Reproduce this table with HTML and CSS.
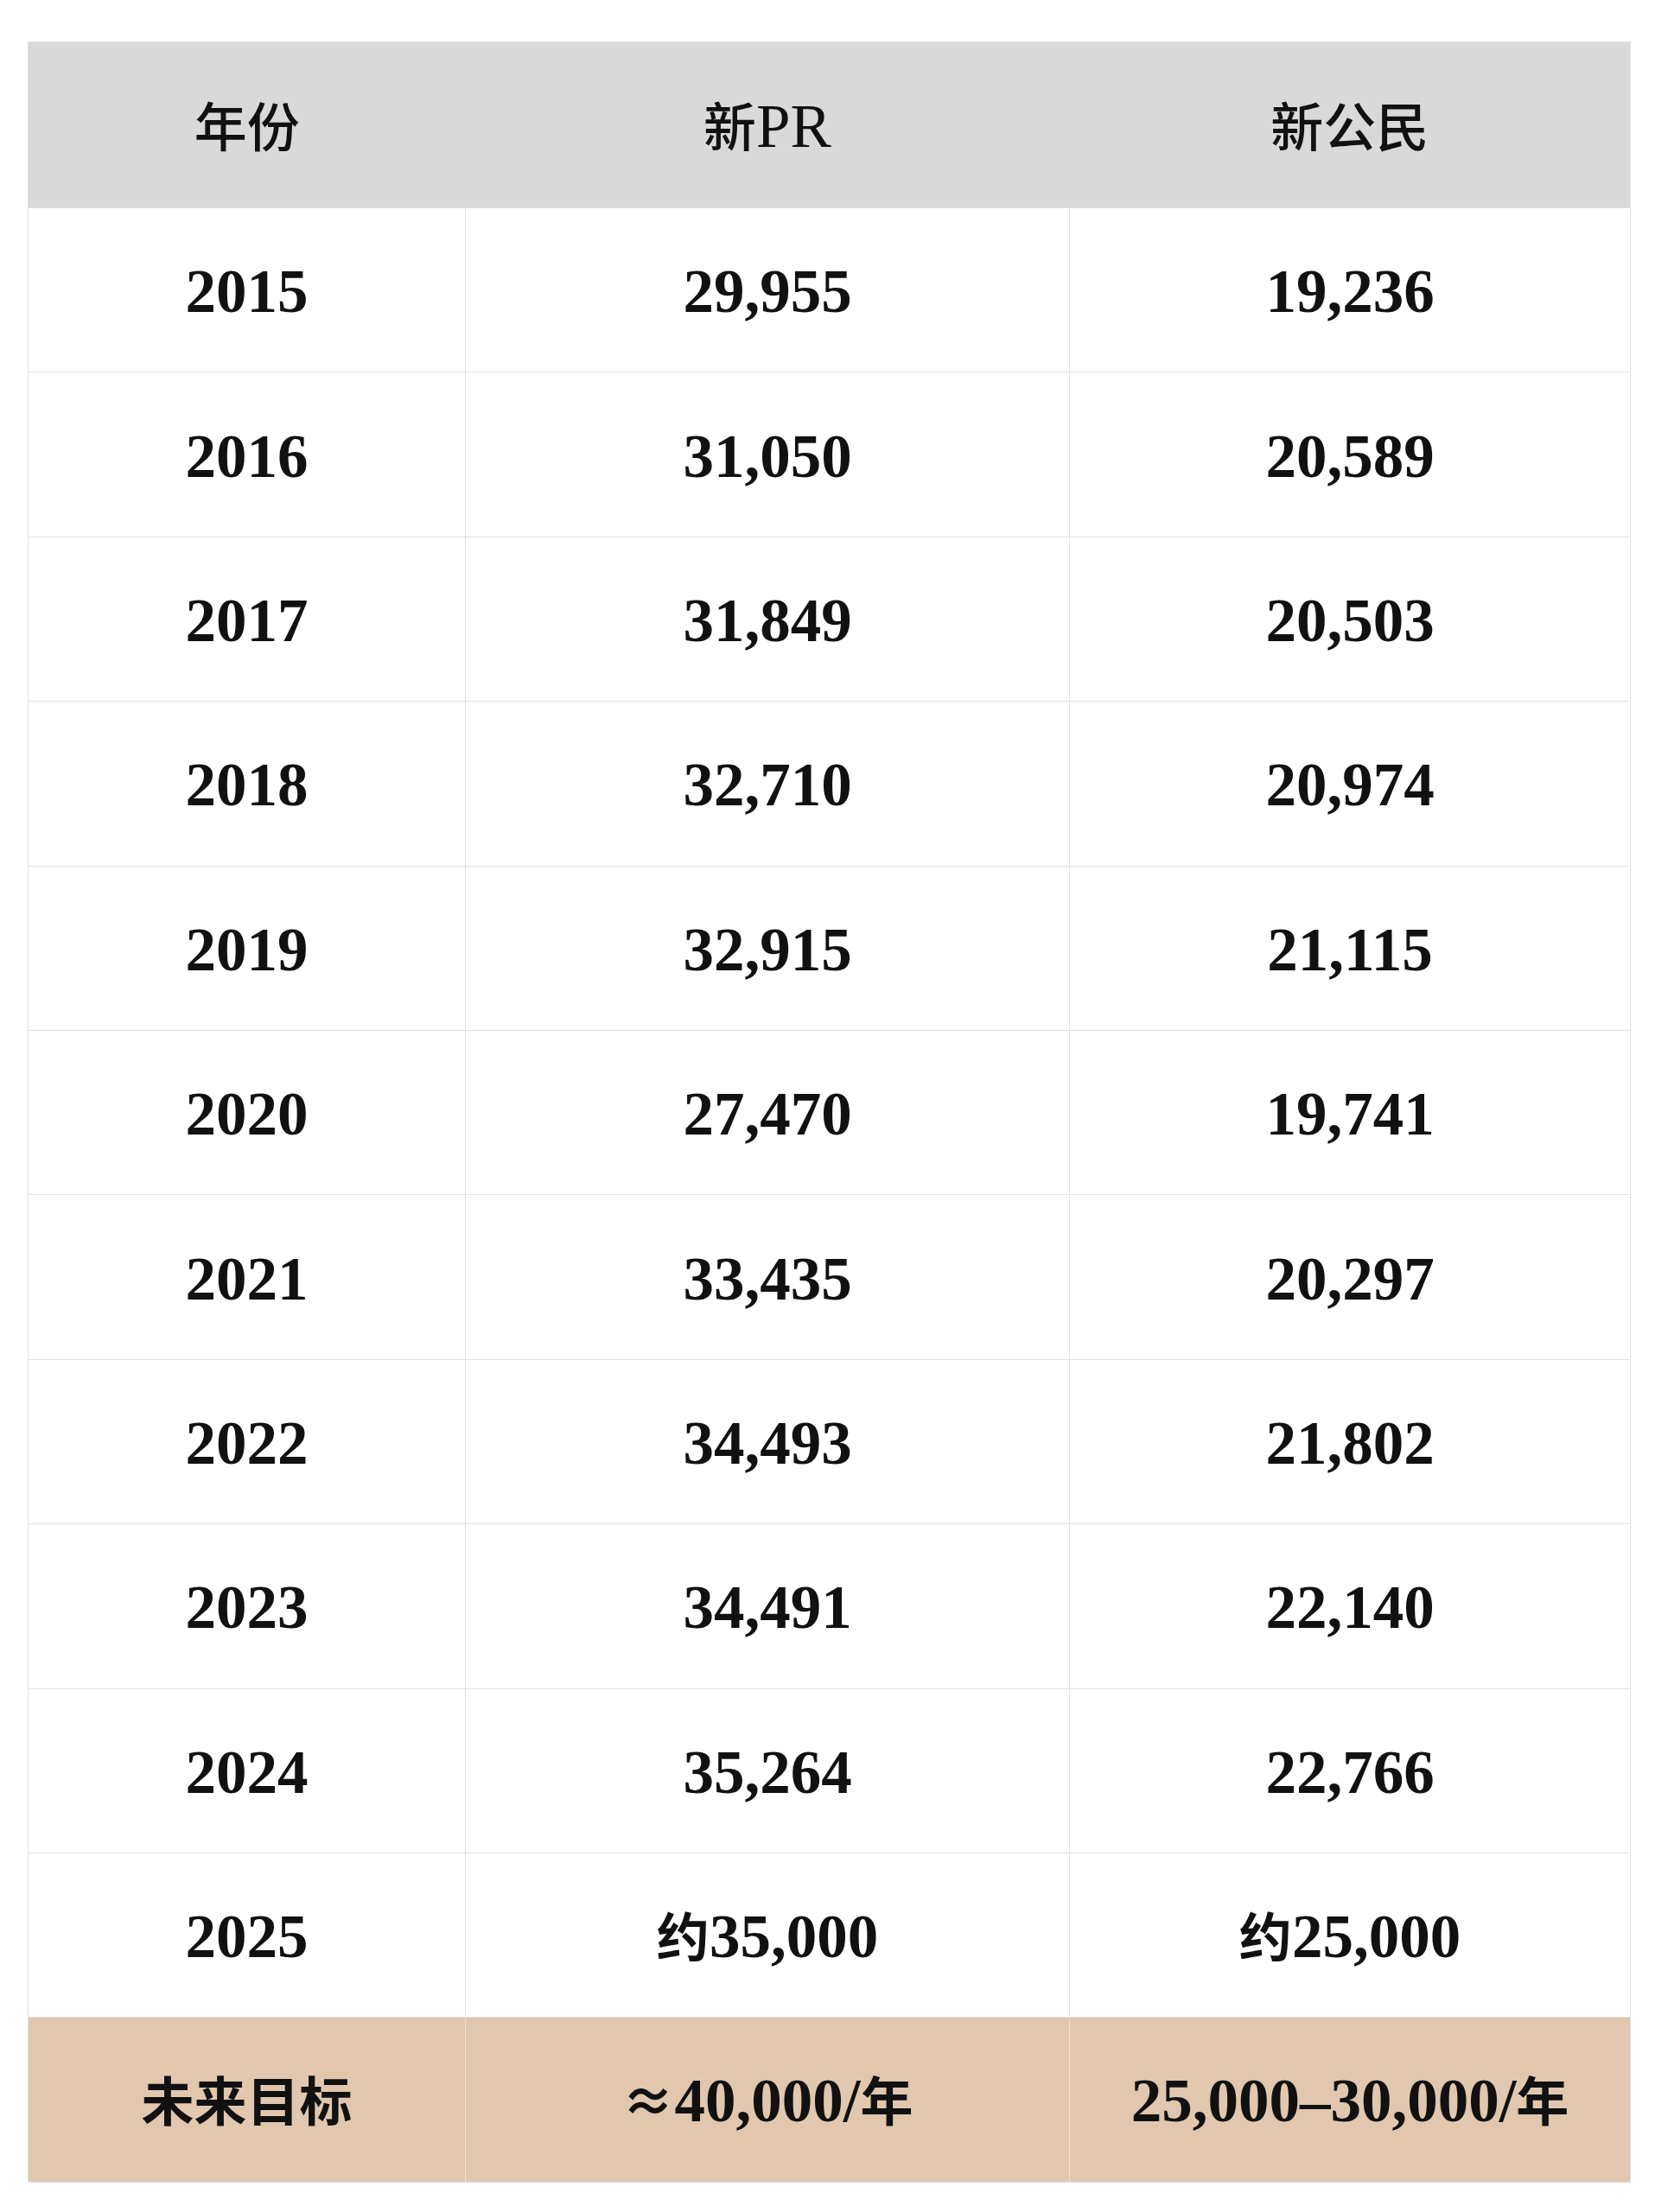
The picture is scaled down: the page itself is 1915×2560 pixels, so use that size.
FILE: index.html
```html
<!DOCTYPE html>
<html lang="zh-CN">
<head>
<meta charset="utf-8">
<title>新PR与新公民</title>
<link rel="stylesheet" href="styles.css">
</head>
<body>
<div class="page">
  <table class="data">
    <colgroup>
      <col class="c1">
      <col class="c2">
      <col class="c3">
    </colgroup>
    <thead>
      <tr><th><span class="zh">年份</span></th><th><span class="zh">新</span>PR</th><th><span class="zh">新公民</span></th></tr>
    </thead>
    <tbody>
      <tr><td>2015</td><td>29,955</td><td>19,236</td></tr>
      <tr><td>2016</td><td>31,050</td><td>20,589</td></tr>
      <tr><td>2017</td><td>31,849</td><td>20,503</td></tr>
      <tr><td>2018</td><td>32,710</td><td>20,974</td></tr>
      <tr><td>2019</td><td>32,915</td><td>21,115</td></tr>
      <tr><td>2020</td><td>27,470</td><td>19,741</td></tr>
      <tr><td>2021</td><td>33,435</td><td>20,297</td></tr>
      <tr><td>2022</td><td>34,493</td><td>21,802</td></tr>
      <tr><td>2023</td><td>34,491</td><td>22,140</td></tr>
      <tr><td>2024</td><td>35,264</td><td>22,766</td></tr>
      <tr><td>2025</td><td><span class="zh">约</span>35,000</td><td><span class="zh">约</span>25,000</td></tr>
    </tbody>
    <tfoot>
      <tr><td><span class="zh">未来目标</span></td><td><span class="zh">≈</span>40,000/<span class="zh">年</span></td><td>25,000–30,000/<span class="zh">年</span></td></tr>
    </tfoot>
  </table>
</div>
</body>
</html>
```

FILE: styles.css
```css
html, body {
  margin: 0;
  padding: 0;
  background: #ffffff;
}

.page {
  padding: 48px 29px 0 32px;
}

.data {
  width: 1854px;
  border-collapse: collapse;
  table-layout: fixed;
  font-family: "Liberation Serif", "Noto Sans CJK SC", serif;
  color: #111111;
  border: 1px solid #e2e2e2;
}

.c1 { width: 506px; }
.c2 { width: 699px; }
.c3 { width: 649px; }

.data th,
.data td {
  height: 185.4px;
  padding: 4px 0 0 0;
  text-align: center;
  vertical-align: middle;
  font-size: 71px;
  line-height: 1;
}

.zh {
  font-family: "Noto Sans CJK SC", sans-serif;
  font-size: 61px;
}

.data thead th {
  background: #d9d9d9;
  font-weight: 500;
  height: 187px;
  border: none;
  border-bottom: 1px solid #e2e2e2;
}

.data tbody td {
  font-weight: 700;
  border: 1px solid #e2e2e2;
  background: #ffffff;
}

.data tfoot td {
  font-weight: 700;
  background: #e0c7ae;
  border: 1px solid #e2e2e2;
}
```
